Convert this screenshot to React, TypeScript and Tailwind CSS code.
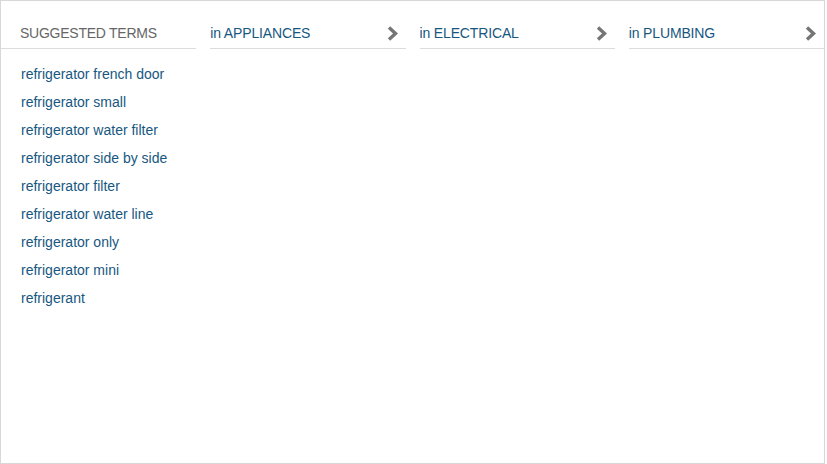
import React from "react";

const terms = [
  "refrigerator french door",
  "refrigerator small",
  "refrigerator water filter",
  "refrigerator side by side",
  "refrigerator filter",
  "refrigerator water line",
  "refrigerator only",
  "refrigerator mini",
  "refrigerant",
];

function Chevron() {
  return (
    <svg width="13" height="15" viewBox="0 0 13 15" className="shrink-0">
      <path d="M3 1.5 L9.5 7.5 L3 13.5" fill="none" stroke="#757575" strokeWidth="3.4" strokeLinecap="butt" strokeLinejoin="miter" />
    </svg>
  );
}

function CatHeader({ label }: { label: string }) {
  return (
    <div className="pt-[22px] pb-[5px] border-b border-[#dcdcdc] flex items-center justify-between">
      <span className="leading-[20px] text-[14px] text-[#17577f] tracking-[-0.15px]">in {label}</span>
      <span className="mr-[7px] flex items-center">
        <Chevron />
      </span>
    </div>
  );
}

export default function App() {
  return (
    <div
      className="w-[825px] h-[464px] border border-[#d8d8d8] bg-white"
      style={{ fontFamily: '"Liberation Sans", Arial, Helvetica, sans-serif' }}
    >
      <div className="grid grid-cols-4 items-start gap-x-[14px]">
        <div>
          <div className="pt-[22px] pb-[5px] border-b border-[#dcdcdc] pl-[19px]">
            <span className="leading-[20px] text-[14px] text-[#666] uppercase block tracking-[-0.25px]">Suggested Terms</span>
          </div>
          <ul className="pt-[11px] pl-[20px]">
            {terms.map((t) => (
              <li key={t} className="leading-[28px] text-[14px] text-[#17577f]">
                {t}
              </li>
            ))}
          </ul>
        </div>
        <CatHeader label="APPLIANCES" />
        <CatHeader label="ELECTRICAL" />
        <CatHeader label="PLUMBING" />
      </div>
    </div>
  );
}
